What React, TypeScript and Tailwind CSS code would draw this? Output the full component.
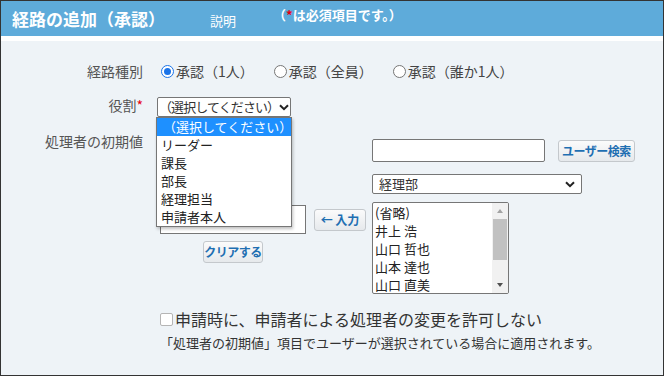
import { useState } from "react";

const jp = "font-['Noto_Sans_CJK_JP','Noto_Sans',sans-serif]";

function Chevron() {
  return (
    <svg width="10" height="7" viewBox="0 0 10 7" className="shrink-0">
      <path d="M1 1.2 5 5.2 9 1.2" fill="none" stroke="#222" strokeWidth="2" />
    </svg>
  );
}

function Radio({ checked }: { checked?: boolean }) {
  return (
    <span
      className={
        "w-[13px] h-[13px] rounded-full border bg-white flex items-center justify-center shrink-0 " +
        (checked ? "border-[#1a73e8]" : "border-[#767676]")
      }
    >
      {checked && <span className="w-[7px] h-[7px] rounded-full bg-[#1a73e8]" />}
    </span>
  );
}

function Btn({ children, className }: { children: React.ReactNode; className?: string }) {
  return (
    <button
      className={
        "flex items-center justify-center whitespace-nowrap rounded-[3px] border border-[#c4c8cc] bg-gradient-to-b from-[#fbfbfb] to-[#e6e9ec] text-[12px] font-bold text-[#1f6fb2] leading-none " +
        (className ?? "")
      }
    >
      {children}
    </button>
  );
}

const roles = ["（選択してください）", "リーダー", "課長", "部長", "経理担当", "申請者本人"];
const users = ["(省略)", "井上 浩", "山口 哲也", "山本 達也", "山口 直美"];

export default function App() {
  const [route, setRoute] = useState(0);

  return (
    <div className={`relative w-[664px] h-[376px] border border-[#333] bg-[#eef3f7] overflow-hidden ${jp}`}>
      <div className="h-[35px] bg-[#5eabda] flex items-center pl-[11px] text-white">
        <h1 className="text-[17px] font-bold leading-none">経路の追加（承認）</h1>
        <span className="ml-[45px] mt-[4px] text-[13px] leading-none">説明</span>
        <span className="ml-[37px] -mt-[8px] text-[13px] font-bold leading-none">
          （<span className="text-[#e60012]">*</span>は必須項目です。）
        </span>
      </div>
      <div className="h-[5px] bg-white" />

      <div className="pt-[19px]">
        {/* 経路種別 */}
        <div className="flex items-center h-[22px]">
          <div className="w-[142px] text-right text-[14px] text-[#555]">経路種別</div>
          <div className="ml-[18px] flex items-center text-[14px] text-[#444]">
            {["承認（1人）", "承認（全員）", "承認（誰か1人）"].map((t, i) => (
              <label
                key={t}
                onClick={() => setRoute(i)}
                className="flex items-center mr-[20px] cursor-pointer"
              >
                <Radio checked={route === i} />
                <span className="ml-[2px]">{t}</span>
              </label>
            ))}
          </div>
        </div>

        {/* 役割 */}
        <div className="flex items-center h-[20px] mt-[15px]">
          <div className="w-[142px] text-right text-[14px] text-[#555] -mt-[3px]">
            役割<span className="text-[#e60012]">*</span>
          </div>
          <div className="ml-[14px] w-[134px] h-[20px] border border-[#767676] rounded-[2px] bg-white flex items-center justify-between pl-[1px] pr-[5px] text-[13px] text-[#333] whitespace-nowrap">
            <span className="tracking-[-0.9px]">（選択してください）</span>
            <Chevron />
          </div>
        </div>

        {/* 処理者の初期値 */}
        <div className="flex mt-[14px]">
          <div className="w-[142px] text-right text-[14px] text-[#555] leading-[20px]">処理者の初期値</div>
          <div className="ml-[17px] mt-[8px] flex items-start">
            <div className="flex flex-col items-center w-[146px] mt-[66px]">
              <div className="w-[146px] h-[29px] border border-[#767676] bg-white" />
              <Btn className="mt-[7px] w-[60px] h-[22px] tracking-[-0.5px]">クリアする</Btn>
            </div>
            <Btn className="ml-[8px] mt-[70px] w-[52px] h-[22px]">← 入力</Btn>
            <div className="ml-[6px] flex flex-col">
              <div className="flex items-center">
                <div className="w-[173px] h-[23px] border border-[#767676] rounded-[2px] bg-white" />
                <Btn className="ml-[13px] w-[77px] h-[22px] tracking-[-0.5px]">ユーザー検索</Btn>
              </div>
              <div className="mt-[12px] w-[210px] h-[20px] border border-[#767676] rounded-[2px] bg-white flex items-center justify-between pl-[6px] pr-[6px] text-[13px] text-[#333]">
                <span>経理部</span>
                <Chevron />
              </div>
              <div className="mt-[8px] w-[137px] h-[92px] border border-[#767676] rounded-[2px] bg-white flex overflow-hidden">
                <div className="flex-1 flex flex-col pl-[2px] pt-[1px] text-[13px] text-[#222]">
                  {users.map((u) => (
                    <div key={u} className="h-[18px] leading-[18px] whitespace-nowrap">
                      {u}
                    </div>
                  ))}
                </div>
                <div className="w-[16px] bg-[#f1f1f1] flex flex-col items-center">
                  <svg width="8" height="16" viewBox="0 0 8 16">
                    <path d="M1 10 4 6 7 10Z" fill="#a3a3a3" />
                  </svg>
                  <div className="w-[14px] h-[41px] bg-[#c1c1c1]" />
                  <div className="flex-1" />
                  <svg width="8" height="16" viewBox="0 0 8 16">
                    <path d="M1 6 4 10 7 6Z" fill="#505050" />
                  </svg>
                </div>
              </div>
            </div>
          </div>
        </div>

        <div className="ml-[159px] mt-[14px] flex items-center h-[22px] text-[16px] text-[#333]">
          <span className="w-[13px] h-[13px] border border-[#b5b5b5] rounded-[2px] bg-white shrink-0" />
          <span className="ml-[2px]">申請時に、申請者による処理者の変更を許可しない</span>
        </div>
        <div className="ml-[159px] mt-[4px] text-[13px] leading-[18px] text-[#333]">
          「処理者の初期値」項目でユーザーが選択されている場合に適用されます。
        </div>
      </div>

      {/* open dropdown of 役割 */}
      <div className="absolute left-[155px] top-[116px] w-[136px] border border-[#767676] bg-white shadow-[1px_2px_3px_rgba(0,0,0,0.25)] text-[13px] text-[#222]">
        {roles.map((r, i) => (
          <div
            key={r}
            className={
              "h-[18px] leading-[18px] pl-[4px] whitespace-nowrap " +
              (i === 0 ? "bg-[#1e90ff] text-white pl-[6px]" : "")
            }
          >
            {r}
          </div>
        ))}
      </div>
    </div>
  );
}
